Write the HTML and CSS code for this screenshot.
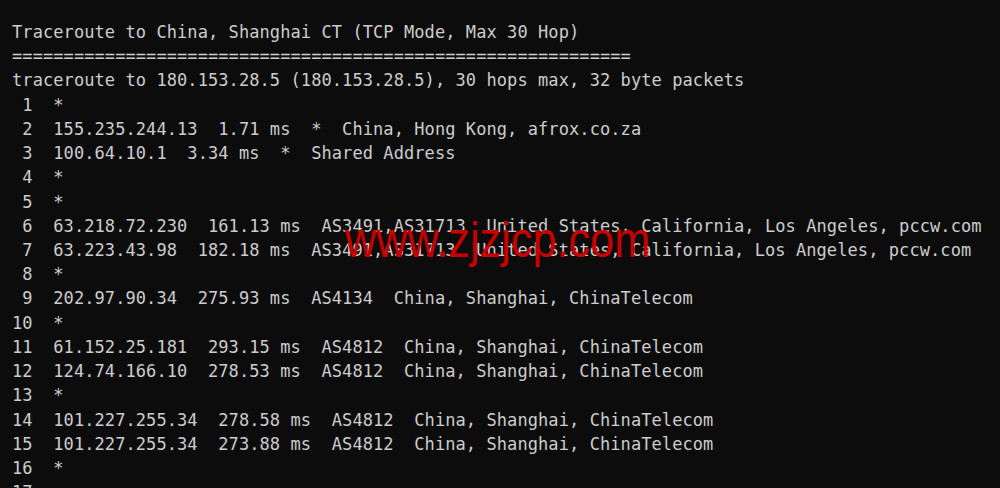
FILE: index.html
```html
<!DOCTYPE html>
<html>
<head>
<meta charset="utf-8">
<link rel="stylesheet" href="styles.css">
</head>
<body>
<div class="term">
<pre class="out">Traceroute to China, Shanghai CT (TCP Mode, Max 30 Hop)
============================================================
traceroute to 180.153.28.5 (180.153.28.5), 30 hops max, 32 byte packets
 1  *
 2  155.235.244.13  1.71 ms  *  China, Hong Kong, afrox.co.za
 3  100.64.10.1  3.34 ms  *  Shared Address
 4  *
 5  *
 6  63.218.72.230  161.13 ms  AS3491,AS31713  United States, California, Los Angeles, pccw.com
 7  63.223.43.98  182.18 ms  AS3491,AS31713  United States, California, Los Angeles, pccw.com
 8  *
 9  202.97.90.34  275.93 ms  AS4134  China, Shanghai, ChinaTelecom
10  *
11  61.152.25.181  293.15 ms  AS4812  China, Shanghai, ChinaTelecom
12  124.74.166.10  278.53 ms  AS4812  China, Shanghai, ChinaTelecom
13  *
14  101.227.255.34  278.58 ms  AS4812  China, Shanghai, ChinaTelecom
15  101.227.255.34  273.88 ms  AS4812  China, Shanghai, ChinaTelecom
16  *
17</pre>
<div class="mark">www.zjzjcp.com</div>
</div>
</body>
</html>
```
FILE: styles.css
```css
html, body {
  margin: 0;
  padding: 0;
  background: #0c0c0c;
  overflow: hidden;
}
.term {
  position: relative;
  width: 1000px;
  height: 488px;
  padding: 20px 0 0 12px;
  box-sizing: border-box;
  overflow: hidden;
}
.out {
  margin: 0;
  font-family: "DejaVu Sans Mono", "Liberation Mono", monospace;
  font-size: 17px;
  letter-spacing: 0.08px;
  line-height: 24.22px;
  color: #cccccc;
  white-space: pre;
}
.mark {
  position: absolute;
  left: 345px;
  top: 212px;
  font-family: "Liberation Sans", Arial, sans-serif;
  font-size: 50px;
  line-height: 56px;
  color: #c80000;
  transform: scaleX(0.865);
  transform-origin: left top;
  white-space: nowrap;
}
```
